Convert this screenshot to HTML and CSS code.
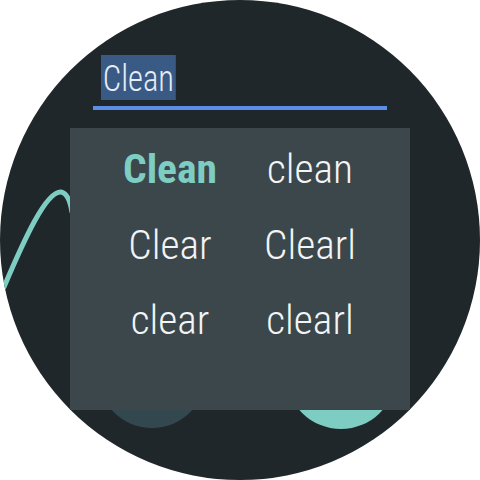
FILE: index.html
```html
<!DOCTYPE html>
<html>
<head>
<meta charset="utf-8">
<link rel="stylesheet" href="styles.css">
</head>
<body>
<div class="watch">
  <svg class="backdrop" width="480" height="480" viewBox="0 0 480 480">
    <path class="wave" d="M4 287 C24 240 46 191 61 192 C67 193 70 200 72 212"/>
    <circle class="dot dot-slate" cx="152" cy="374" r="54"/>
    <circle class="dot dot-teal" cx="341" cy="374" r="55"/>
  </svg>
  <div class="content">
    <div class="field"><span class="sel">Clean</span></div>
    <div class="panel">
      <div class="cell best">Clean</div>
      <div class="cell">clean</div>
      <div class="cell">Clear</div>
      <div class="cell">Clearl</div>
      <div class="cell">clear</div>
      <div class="cell">clearl</div>
    </div>
  </div>
</div>
</body>
</html>
```
FILE: styles.css
```css
html, body {
  margin: 0;
  padding: 0;
  background: #ffffff;
}
body {
  width: 480px;
  height: 480px;
  font-family: Roboto, "Liberation Sans", sans-serif;
  font-stretch: 75%;
}
.watch {
  position: relative;
  width: 480px;
  height: 480px;
  border-radius: 50%;
  overflow: hidden;
  background: #1f272b;
}
.backdrop {
  position: absolute;
  left: 0;
  top: 0;
}
.wave {
  fill: none;
  stroke: #7ecdc3;
  stroke-width: 5;
  stroke-linecap: round;
}
.dot-slate { fill: #33474f; }
.dot-teal { fill: #7ecdc3; }
.content {
  position: relative;
  padding-top: 55px;
}
.field {
  margin: 0 93px;
  padding: 0 0 5px 8px;
  border-bottom: 4px solid #5b8ee6;
  height: 46px;
}
.sel {
  display: inline-block;
  height: 45px;
  line-height: 47px;
  padding: 0 2px;
  background: #3a5a86;
  color: #e6edf5;
  font-size: 37px;
  font-weight: 300;
  font-stretch: 75%;
  transform: scaleX(0.88);
  transform-origin: left center;
}
.panel {
  margin: 18px 70px 0;
  height: 279px;
  padding-top: 3px;
  background: #3c474c;
  display: grid;
  grid-template-columns: 140px 140px;
  grid-auto-rows: 75.5px;
  justify-content: center;
}
.cell {
  text-align: center;
  line-height: 75px;
  font-size: 41.5px;
  font-weight: 300;
  font-stretch: 75%;
  color: #f2f4f5;
}
.cell.best {
  color: #7ecdc3;
  font-weight: 700;
}
```
